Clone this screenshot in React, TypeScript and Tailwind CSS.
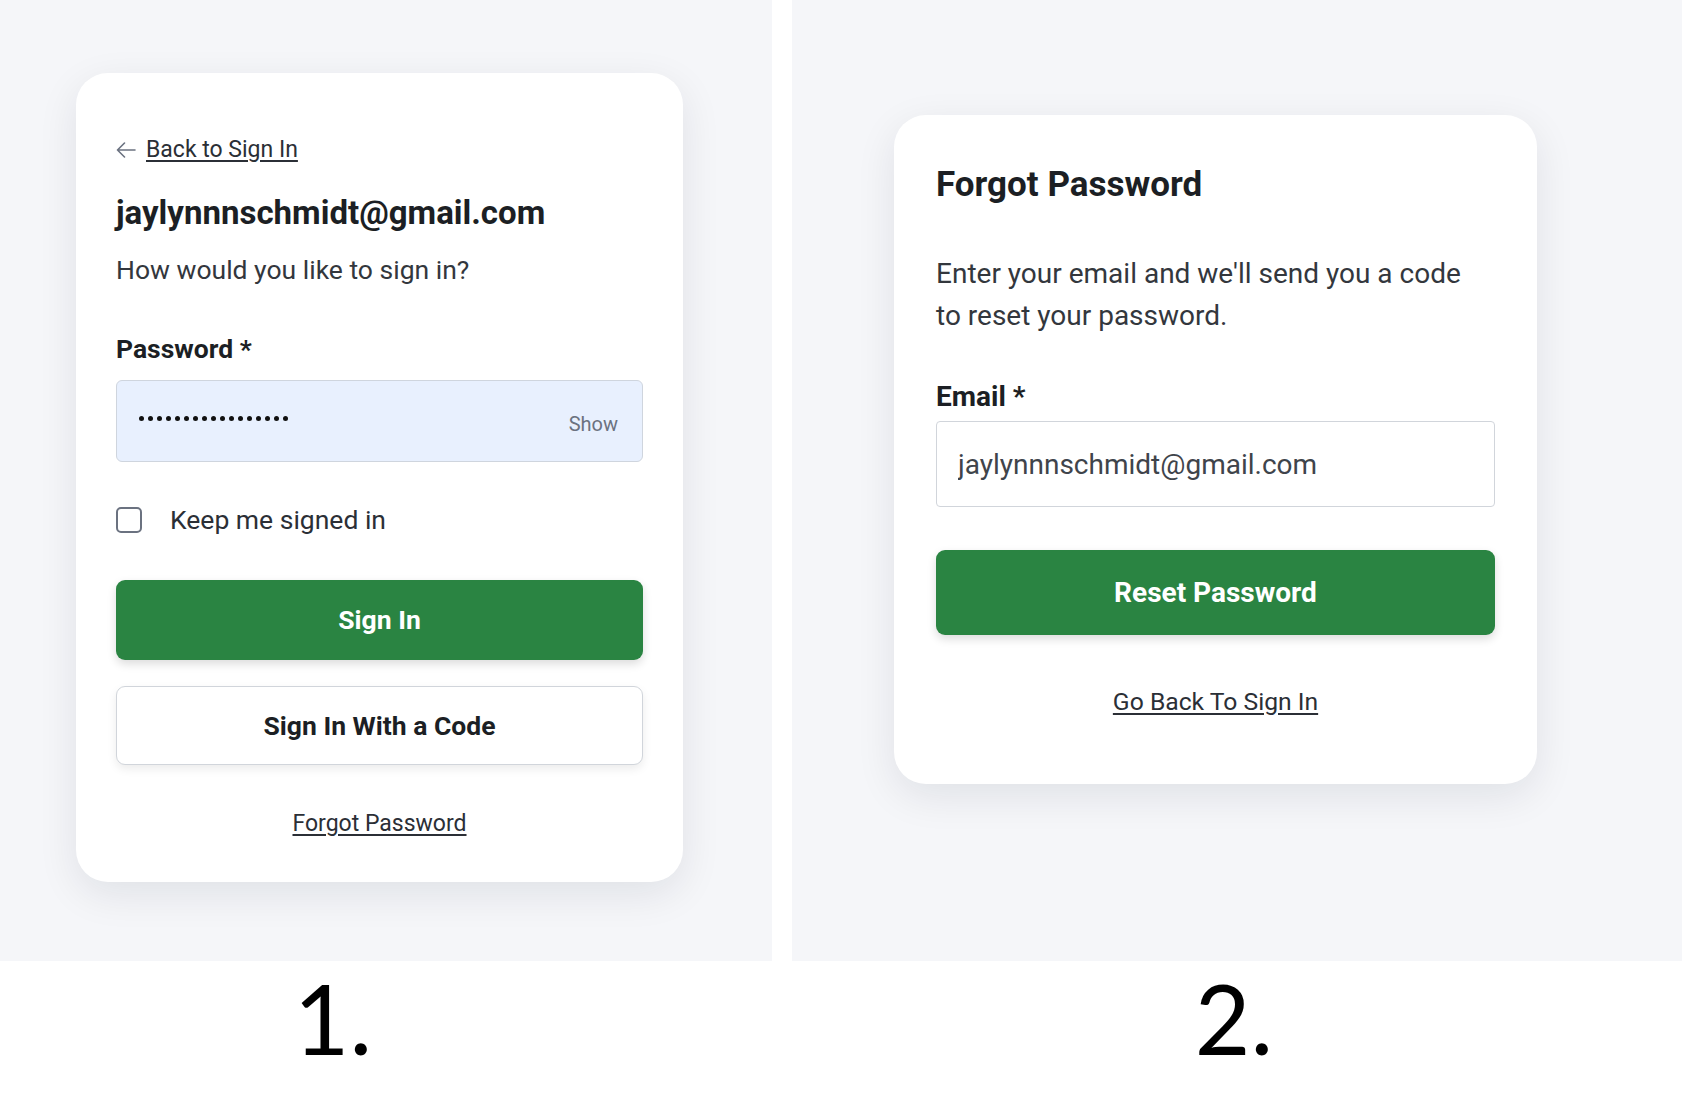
const roboto = "font-['Roboto',_'Liberation_Sans',_sans-serif]";

function BackArrow() {
  return (
    <svg width="20" height="16" viewBox="0 0 20 16" fill="none" className="shrink-0">
      <path d="M19 8H1.5M8.5 1 1.5 8l7 7" stroke="#6b7280" strokeWidth="1.6" strokeLinecap="round" strokeLinejoin="round" />
    </svg>
  );
}

function SignInCard() {
  return (
    <div className="flex h-[809px] w-[607px] flex-col rounded-[32px] bg-white px-[40px] pt-[65px] shadow-[0_12px_40px_rgba(15,23,42,0.09)]">
      <a href="#" className="flex h-[24px] items-center gap-[10px] text-[23px] leading-[24px] text-[#2b2f36]">
        <BackArrow />
        <span className="underline underline-offset-[3px]">Back to Sign In</span>
      </a>
      <h1 className="mt-[33px] text-[33px] font-bold leading-[36px] text-[#1c1f24]">
        jaylynnnschmidt@gmail.com
      </h1>
      <p className="mt-[25px] text-[26.5px] leading-[28px] text-[#33373d]">How would you like to sign in?</p>

      <label className="mt-[51px] text-[26.5px] font-bold leading-[28px] text-[#1c1f24]">Password *</label>
      <div className="mt-[17px] flex h-[82px] items-center justify-between rounded-[6px] border border-[#cfd5de] bg-[#e8f0fe] pl-[22px] pr-[24px]">
        <div className="-mt-[6px] flex gap-[4px]">
          {Array.from({ length: 17 }).map((_, i) => (
            <span key={i} className="size-[5px] rounded-full bg-[#111]" />
          ))}
        </div>
        <span className="mt-[6px] text-[20px] text-[#6b7280]">Show</span>
      </div>

      <label className="mt-[44px] flex items-center gap-[28px]">
        <span className="size-[26px] rounded-[5px] border-2 border-[#6b7280] bg-white" />
        <span className="text-[26.5px] leading-[28px] text-[#2b2f36]">Keep me signed in</span>
      </label>

      <button className="mt-[46px] h-[80px] w-full rounded-[9px] bg-[#2a8442] text-[26.5px] font-bold text-white shadow-[0_4px_10px_rgba(0,0,0,0.14)]">
        Sign In
      </button>
      <button className="mt-[26px] h-[79px] w-full rounded-[9px] border border-[#d1d5db] bg-white text-[26.5px] font-bold text-[#1c1f24] shadow-[0_4px_10px_rgba(0,0,0,0.08)]">
        Sign In With a Code
      </button>

      <a href="#" className="mt-[47px] self-center text-[23px] leading-[24px] text-[#2b2f36] underline underline-offset-[3px]">
        Forgot Password
      </a>
    </div>
  );
}

function ForgotCard() {
  return (
    <div className="flex h-[669px] w-[643px] flex-col rounded-[32px] bg-white px-[42px] pt-[50px] shadow-[0_12px_40px_rgba(15,23,42,0.09)]">
      <h1 className="text-[35px] font-bold leading-[40px] text-[#1c1f24]">Forgot Password</h1>
      <p className="mt-[48px] text-[28px] leading-[42px] text-[#33373d]">
        Enter your email and we'll send you a code
        <br />
        to reset your password.
      </p>

      <label className="mt-[45px] text-[28px] font-bold leading-[30px] text-[#1c1f24]">Email *</label>
      <input
        readOnly
        value="jaylynnnschmidt@gmail.com"
        className="mt-[9px] h-[86px] w-full rounded-[4px] border border-[#d1d5db] bg-white px-[21px] text-[28px] text-[#3f444b] outline-none"
      />

      <button className="mt-[43px] h-[85px] w-full rounded-[9px] bg-[#2a8442] text-[28px] font-bold text-white shadow-[0_4px_10px_rgba(0,0,0,0.14)]">
        Reset Password
      </button>

      <a href="#" className="mt-[53px] self-center text-[24.7px] leading-[28px] text-[#2b2f36] underline underline-offset-[3px]">
        Go Back To Sign In
      </a>
    </div>
  );
}

export default function App() {
  return (
    <div className={`flex h-[1101px] w-[1682px] overflow-hidden bg-white ${roboto}`}>
      <div className="flex w-[772px] flex-col">
        <div className="h-[961px] bg-[#f5f6f9] pl-[76px] pt-[73px]">
          <SignInCard />
        </div>
        <div className="w-[666px] pt-[9px] text-center font-['Lato',_sans-serif] text-[96px] leading-[96px] text-black">
          1.
        </div>
      </div>
      <div className="ml-[20px] flex w-[890px] flex-col">
        <div className="h-[961px] bg-[#f5f6f9] pl-[102px] pt-[115px]">
          <ForgotCard />
        </div>
        <div className="w-[884px] pt-[9px] text-center font-['Lato',_sans-serif] text-[96px] leading-[96px] text-black">
          2.
        </div>
      </div>
    </div>
  );
}
